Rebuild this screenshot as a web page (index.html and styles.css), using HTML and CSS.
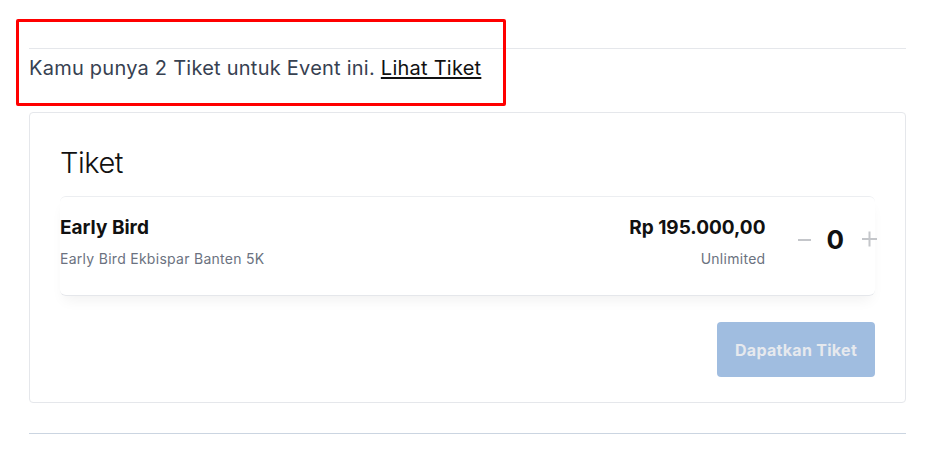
FILE: index.html
```html
<!DOCTYPE html>
<html lang="en">
<head>
    <meta charset="UTF-8">
    <meta name="viewport" content="width=device-width, initial-scale=1.0">
    <title>Tiket Event</title>
    <link rel="stylesheet" href="styles.css">
</head>
<body>
    <div class="page">
        <div class="owned">
            <p class="owned-text">Kamu punya 2 Tiket untuk Event ini. <a href="#" class="owned-link">Lihat Tiket</a></p>
            <div class="highlight"></div>
        </div>

        <div class="ticket-card">
            <h2 class="ticket-title">Tiket</h2>

            <div class="ticket-item">
                <div class="ticket-info">
                    <div class="ticket-name">Early Bird</div>
                    <div class="ticket-desc">Early Bird Ekbispar Banten 5K</div>
                </div>
                <div class="ticket-price">
                    <div class="price">Rp 195.000,00</div>
                    <div class="quota">Unlimited</div>
                </div>
                <div class="counter">
                    <button class="counter-btn minus" aria-label="Kurangi">
                        <svg width="13" height="30" viewBox="0 0 13 30"><path d="M0 15h13" stroke="currentColor" stroke-width="2"/></svg>
                    </button>
                    <span class="counter-value">0</span>
                    <button class="counter-btn plus" aria-label="Tambah">
                        <svg width="15" height="30" viewBox="0 0 15 30"><path d="M0 14h15M7.5 6.5v15" stroke="currentColor" stroke-width="2"/></svg>
                    </button>
                </div>
            </div>

            <div class="actions">
                <button class="buy-btn" disabled>Dapatkan Tiket</button>
            </div>
        </div>

        <div class="divider"></div>
    </div>
</body>
</html>
```

FILE: styles.css
```css
body {
    margin: 0;
    font-family: Inter, "Noto Sans", sans-serif;
    background-color: #fff;
    color: #111;
}
.page {
    width: 877px;
    margin-left: 29px;
    padding-top: 48px;
}
.owned {
    position: relative;
    border-top: 1px solid #e5e7eb;
    padding-top: 5px;
    margin-bottom: 30px;
}
.owned-text {
    margin: 0;
    font-size: 20px;
    line-height: 28px;
    letter-spacing: 0.24px;
    color: #374151;
}
.owned-link {
    color: #111;
    text-decoration: underline;
    text-underline-offset: 2px;
}
.highlight {
    position: absolute;
    left: -13px;
    top: -30px;
    width: 484px;
    height: 81px;
    border: 3px solid #ff0000;
    border-radius: 2px;
}
.ticket-card {
    border: 1px solid #e5e7eb;
    border-radius: 4px;
    padding: 32px 30px 25px 30px;
}
.ticket-title {
    margin: 0 0 15px 0;
    font-size: 29px;
    line-height: 36px;
    font-weight: 300;
    letter-spacing: -0.5px;
    color: #111;
}
.ticket-item {
    display: flex;
    align-items: flex-start;
    border-top: 1px solid #eceef1;
    border-bottom: 1px solid #e5e7eb;
    border-radius: 6px;
    box-shadow: 0 8px 14px -4px rgba(0, 0, 0, 0.06);
    padding: 19px 0 26px 0;
}
.ticket-info {
    flex: 1;
}
.ticket-name, .price {
    font-size: 19px;
    line-height: 24px;
    font-weight: 700;
    color: #111;
}
.ticket-desc, .quota {
    margin-top: 9px;
    font-size: 14px;
    line-height: 20px;
    letter-spacing: 0.28px;
    color: #6b7280;
}
.ticket-price {
    text-align: right;
}
.counter {
    display: flex;
    align-items: center;
    margin: 9px -2px 0 33px;
}
.counter-btn {
    display: flex;
    background: none;
    border: none;
    padding: 0;
    color: #c4c6ca;
    cursor: pointer;
}
.counter-value {
    margin: 0 18px 0 15px;
    font-size: 26px;
    line-height: 30px;
    font-weight: 700;
    color: #111;
}
.actions {
    display: flex;
    justify-content: flex-end;
    margin-top: 26px;
}
.buy-btn {
    width: 158px;
    height: 55px;
    background-color: #a0bde0;
    border: none;
    border-radius: 4px;
    font-family: inherit;
    font-size: 16px;
    font-weight: 700;
    letter-spacing: 0.3px;
    color: #e6e9ee;
}
.divider {
    margin-top: 30px;
    border-top: 1px solid #cbd5e1;
}
```
